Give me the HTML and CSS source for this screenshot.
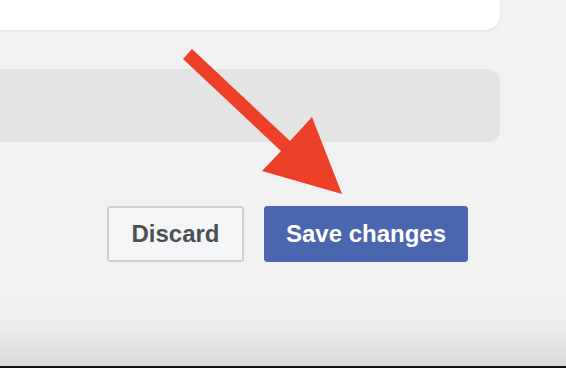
FILE: index.html
```html
<!DOCTYPE html>
<html>
<head>
<meta charset="utf-8">
<link rel="stylesheet" href="styles.css">
</head>
<body>
<div class="page">
  <div class="column">
    <div class="card"></div>
    <div class="bar"></div>
    <div class="actions">
      <button class="btn btn-discard">Discard</button>
      <button class="btn btn-save">Save changes</button>
    </div>
  </div>
  <div class="bottom-edge"></div>
  <svg class="arrow" width="566" height="368" viewBox="0 0 566 368">
    <polygon points="183,59 192,49 290,141 312,117 342,194 262,171 281,151" fill="#ec4028"/>
  </svg>
</div>
</body>
</html>
```

FILE: styles.css
```css
html, body {
  margin: 0;
  padding: 0;
  width: 566px;
  height: 368px;
  overflow: hidden;
}
body {
  background: #f2f2f2;
  font-family: "Liberation Sans", Arial, sans-serif;
}
.page {
  position: relative;
  width: 566px;
  height: 368px;
  display: flex;
  flex-direction: column;
  background: linear-gradient(to bottom, #f2f2f2 0, #f2f2f2 285px, #eeeeee 325px, #d9d9d9 366px);
}
.column {
  width: 500px;
  display: flex;
  flex-direction: column;
}
.card {
  height: 30px;
  background: #ffffff;
  border-radius: 0 0 15px 0;
  box-shadow: 0 1px 3px rgba(0,0,0,0.08);
}
.bar {
  margin-top: 39px;
  height: 73px;
  background: #e4e4e4;
  border-radius: 0 12px 12px 0;
}
.actions {
  margin-top: 64px;
  display: flex;
  justify-content: flex-end;
  gap: 20px;
  padding-right: 32px;
}
.btn {
  height: 56px;
  border-radius: 3px;
  font-family: "Liberation Sans", Arial, sans-serif;
  font-weight: bold;
  font-size: 24px;
  padding: 0;
  display: flex;
  align-items: center;
  justify-content: center;
  box-sizing: border-box;
}
.btn-discard {
  width: 137px;
  background: #f5f6f7;
  border: 2px solid #ccd0d5;
  color: #4b4f56;
}
.btn-save {
  width: 204px;
  background: #4a66ae;
  border: 1px solid #4a66ae;
  color: #ffffff;
}
.bottom-edge {
  margin-top: auto;
  height: 2px;
  background: #111111;
}
.arrow {
  position: absolute;
  left: 0;
  top: 0;
}
```
